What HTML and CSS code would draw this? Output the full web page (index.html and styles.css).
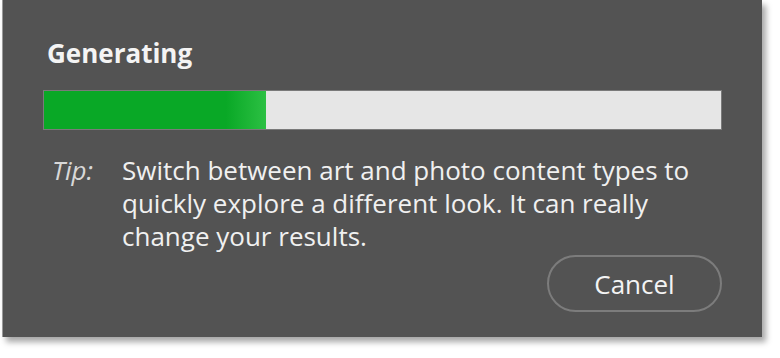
FILE: index.html
```html
<!DOCTYPE html>
<html>
<head>
<meta charset="utf-8">
<link rel="stylesheet" href="styles.css">
</head>
<body>
<div class="dialog">
  <h1 class="title">Generating</h1>
  <div class="bar"><div class="fill" style="width:32.8%"></div></div>
  <div class="tip">
    <span class="tip-label">Tip:</span>
    <p class="tip-text">Switch between art and photo content types to quickly explore a different look. It can really change your results.</p>
  </div>
  <div class="footer">
    <button class="cancel">Cancel</button>
  </div>
</div>
</body>
</html>
```
FILE: styles.css
```css
html, body {
  margin: 0;
  padding: 0;
  background: #ffffff;
}
body {
  width: 780px;
  height: 358px;
  overflow: hidden;
  font-family: "Open Sans", "Lato", sans-serif;
  font-variant-ligatures: none;
}
.dialog {
  box-sizing: border-box;
  margin-left: 2px;
  width: 760px;
  height: 337px;
  background: #535353;
  border-left: 1px solid #9a9a9a;
  box-shadow: 4px 5px 6px rgba(0, 0, 0, 0.35);
  padding: 37px 40px 0 40px;
  display: flex;
  flex-direction: column;
}
.title {
  margin: 0 0 0 4px;
  font-size: 26px;
  font-weight: 700;
  color: #f4f4f4;
  line-height: 32px;
}
.bar {
  margin-top: 21px;
  height: 40px;
  box-sizing: border-box;
  border: 1px solid #7a7a7a;
  background: #e6e6e6;
  display: flex;
}
.fill {
  height: 100%;
  background: linear-gradient(to right, #09a826 0%, #09a826 82%, #2cc043 100%);
}
.tip {
  margin-top: 24px;
  display: flex;
  color: #f0f0f0;
  font-size: 26px;
  line-height: 33px;
}
.tip-label {
  font-style: italic;
  width: 70px;
  flex: none;
  padding-left: 9px;
  color: #d8d8d8;
}
.tip-text {
  margin: 0;
  width: 590px;
}
.footer {
  display: flex;
  justify-content: flex-end;
  margin-top: 2px;
}
.cancel {
  width: 175px;
  height: 57px;
  border-radius: 29px;
  border: 2px solid #7c7c7c;
  background: transparent;
  color: #f4f4f4;
  font-family: "Open Sans", "Lato", sans-serif;
  font-size: 26px;
}
```
